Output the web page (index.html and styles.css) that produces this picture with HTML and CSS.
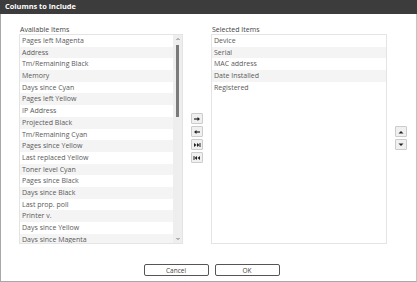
FILE: index.html
```html
<!DOCTYPE html>
<html lang="en">

  <head>
    <meta charset="UTF-8">
    <title>Columns to include</title>
    <link rel="stylesheet" href="styles.css">
  </head>

  <body>
    <div class="dialog">
      <div class="dialog__title">Columns to include</div>

      <div class="dialog__body">

        <div class="list__col list__col--left">
          <span class="list__label">Available Items</span>
          <div class="list__box">
            <ul class="list__items">
              <li>Pages left Magenta</li>
              <li>Address</li>
              <li>Tm/Remaining Black</li>
              <li>Memory</li>
              <li>Days since Cyan</li>
              <li>Pages left Yellow</li>
              <li>IP Address</li>
              <li>Projected Black</li>
              <li>Tm/Remaining Cyan</li>
              <li>Pages since Yellow</li>
              <li>Last replaced Yellow</li>
              <li>Toner level Cyan</li>
              <li>Pages since Black</li>
              <li>Days since Black</li>
              <li>Last prop. poll</li>
              <li>Printer v.</li>
              <li>Days since Yellow</li>
              <li>Days since Magenta</li>
            </ul>
            <div class="scrollbar">
              <svg class="scrollbar__arrow" width="8" height="8" viewBox="0 0 8 8"><path d="M2.5 5 L4 3.5 L5.5 5" fill="none" stroke="#777" stroke-width="1"/></svg>
              <div class="scrollbar__track">
                <div class="scrollbar__thumb"></div>
              </div>
              <svg class="scrollbar__arrow" width="8" height="8" viewBox="0 0 8 8"><path d="M2.5 3 L4 4.5 L5.5 3" fill="none" stroke="#777" stroke-width="1"/></svg>
            </div>
          </div>
        </div>

        <div class="move__btns">
          <button class="tool__btn">
            <svg width="8" height="6" viewBox="0 0 8 6"><path d="M1 3 H6" stroke="#222" stroke-width="1.2"/><path d="M4.5 1 L7 3 L4.5 5 Z" fill="#222"/></svg>
          </button>
          <button class="tool__btn">
            <svg width="8" height="6" viewBox="0 0 8 6"><path d="M2 3 H7" stroke="#222" stroke-width="1.2"/><path d="M3.5 1 L1 3 L3.5 5 Z" fill="#222"/></svg>
          </button>
          <button class="tool__btn">
            <svg width="8" height="6" viewBox="0 0 8 6"><path d="M1 1 L3.5 3 L1 5 Z M4 1 L6.5 3 L4 5 Z" fill="#222"/><path d="M7 1 V5" stroke="#222" stroke-width="1"/></svg>
          </button>
          <button class="tool__btn">
            <svg width="8" height="6" viewBox="0 0 8 6"><path d="M7 1 L4.5 3 L7 5 Z M4 1 L1.5 3 L4 5 Z" fill="#222"/><path d="M1 1 V5" stroke="#222" stroke-width="1"/></svg>
          </button>
        </div>

        <div class="list__col list__col--right">
          <span class="list__label">Selected Items</span>
          <div class="list__box">
            <ul class="list__items">
              <li>Device</li>
              <li>Serial</li>
              <li>MAC address</li>
              <li>Date Installed</li>
              <li>Registered</li>
            </ul>
          </div>
        </div>

        <div class="order__btns">
          <button class="tool__btn">
            <svg width="8" height="6" viewBox="0 0 8 6"><path d="M1.5 4.5 L4 2 L6.5 4.5 Z" fill="#222"/></svg>
          </button>
          <button class="tool__btn">
            <svg width="8" height="6" viewBox="0 0 8 6"><path d="M1.5 1.5 L4 4 L6.5 1.5 Z" fill="#222"/></svg>
          </button>
        </div>

      </div>

      <div class="dialog__footer">
        <button class="footer__btn">Cancel</button>
        <button class="footer__btn">OK</button>
      </div>
    </div>
  </body>

</html>
```

FILE: styles.css
```css
* {
  margin: 0;
  padding: 0;
  box-sizing: border-box;
}

body {
  background-color: #ffffff;
  font-family: "Open Sans", "Noto Sans", sans-serif;
  color: #555555;
  width: 417px;
  height: 282px;
  overflow: hidden;
}

.dialog {
  display: flex;
  flex-direction: column;
  width: 417px;
  height: 282px;
  border: 1px solid #a8a8a8;
  border-top: none;
  border-right-color: #c4c4c4;
}

.dialog__title {
  height: 14px;
  line-height: 13px;
  background-color: #3c3c3c;
  color: #ffffff;
  font-size: 7.4px;
  font-weight: 700;
  margin: 0 -1px;
  padding-left: 5px;
}

.dialog__body {
  display: flex;
  align-items: center;
  padding: 11px 0 0 18px;
  height: 231px;
}

.list__col {
  display: flex;
  flex-direction: column;
  height: 100%;
}

.list__col--left {
  width: 164px;
}

.list__col--right {
  width: 176px;
}

.list__label {
  font-size: 7px;
  line-height: 9px;
  color: #444444;
  padding-left: 1px;
}

.list__box {
  display: flex;
  height: 210px;
  border: 1px solid #e4e4e4;
  overflow: hidden;
}

.list__items {
  flex: 1;
  list-style: none;
}

.list__items li {
  height: 11.7px;
  line-height: 11.7px;
  padding-left: 2px;
  font-size: 7px;
  color: #5a5a5a;
  white-space: nowrap;
}

.list__items li:nth-child(even) {
  background-color: #f4f4f4;
}

.scrollbar {
  display: flex;
  flex-direction: column;
  align-items: center;
  width: 9px;
  background-color: #eeeeee;
}

.scrollbar__track {
  flex: 1;
  width: 100%;
  display: flex;
  justify-content: center;
  padding-top: 2px;
}

.scrollbar__thumb {
  width: 3px;
  height: 72px;
  background-color: #7a7a7a;
}

.move__btns,
.order__btns {
  display: flex;
  flex-direction: column;
  gap: 2px;
  padding-top: 6px;
}

.move__btns {
  margin: 0 8px 0 8px;
}

.order__btns {
  margin-left: 8px;
}

.tool__btn {
  display: flex;
  align-items: center;
  justify-content: center;
  width: 12px;
  height: 11px;
  padding: 0;
  background-color: #f0f0f0;
  border: 1px solid #cccccc;
  border-radius: 1px;
}

.dialog__footer {
  display: flex;
  justify-content: center;
  gap: 6px;
  padding-top: 19px;
  padding-left: 6px;
}

.footer__btn {
  width: 65px;
  height: 12px;
  padding: 0;
  background-color: #ffffff;
  border: 1px solid #555555;
  border-radius: 2px;
  font-family: "Open Sans", "Noto Sans", sans-serif;
  font-size: 6.5px;
  color: #444444;
}
```
